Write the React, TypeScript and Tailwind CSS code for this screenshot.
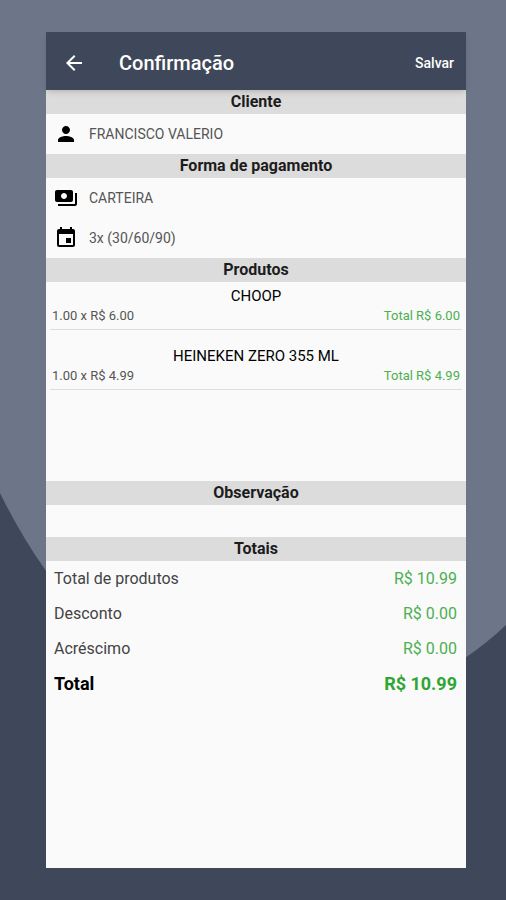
import type { ReactNode } from 'react';
import { MdArrowBack, MdEvent, MdPayments, MdPerson } from 'react-icons/md';

const PRODUCTS = [
    { name: 'CHOOP', quantity: '1.00', price: '6.00', total: '6.00' },
    { name: 'HEINEKEN ZERO 355 ML', quantity: '1.00', price: '4.99', total: '4.99' },
];

const TOTALS = [
    { label: 'Total de produtos', value: '10.99' },
    { label: 'Desconto', value: '0.00' },
    { label: 'Acréscimo', value: '0.00' },
];

function Backdrop() {
    return (
        <svg
            className="absolute inset-0 -z-10 h-full w-full"
            viewBox="0 0 506 900"
            preserveAspectRatio="none"
            aria-hidden="true"
        >
            <path d="M0 0H506V625Q487 643 465 658C330 745 150 720 46 571Q20 534 0 493Z" fill="#6c7688" />
        </svg>
    );
}

function SectionTitle({ id, children }: { id?: string; children: ReactNode }) {
    return (
        <h2 id={id} className="h-6 bg-[#dcdcdc] text-center text-base leading-6 font-bold text-[#1c1c1c]">
            {children}
        </h2>
    );
}

function InfoRow({ icon, children }: { icon: ReactNode; children: ReactNode }) {
    return (
        <div className="flex h-10 items-center gap-[11px] px-2 text-sm text-[#555555]">
            <span className="flex w-6 justify-center text-2xl text-black">{icon}</span>
            <span>{children}</span>
        </div>
    );
}

export default function App() {
    return (
        <div className="relative isolate flex min-h-screen flex-col bg-[#3e485a] pt-8 pr-10 pb-8 pl-[46px] font-['Roboto',sans-serif]">
            <Backdrop />
            <main className="flex flex-1 flex-col bg-[#fafafa]">
                <header className="z-10 flex h-[58px] items-center bg-[#3e485a] pt-1 pr-3 pl-4 text-white shadow-md">
                    <button type="button" aria-label="Voltar" className="text-2xl">
                        <MdArrowBack />
                    </button>
                    <h1 className="ml-[33px] flex-1 text-xl font-medium">Confirmação</h1>
                    <button type="button" className="text-sm font-medium">Salvar</button>
                </header>

                <section>
                    <SectionTitle>Cliente</SectionTitle>
                    <InfoRow icon={<MdPerson />}>FRANCISCO VALERIO</InfoRow>
                </section>

                <section>
                    <SectionTitle>Forma de pagamento</SectionTitle>
                    <InfoRow icon={<MdPayments />}>CARTEIRA</InfoRow>
                    <InfoRow icon={<MdEvent />}>3x (30/60/90)</InfoRow>
                </section>

                <section>
                    <SectionTitle>Produtos</SectionTitle>
                    <ul className="min-h-[199px] px-1">
                        {PRODUCTS.map(p => (
                            <li key={p.name} className="mb-3 border-b border-[#dedede] px-0.5 pt-1 pb-1">
                                <h3 className="text-center text-[15px] leading-5 text-black">{p.name}</h3>
                                <div className="flex justify-between text-[13px] leading-[19px] text-[#555555]">
                                    <span>{p.quantity} x R$ {p.price}</span>
                                    <span className="text-[#4caf50]">Total R$ {p.total}</span>
                                </div>
                            </li>
                        ))}
                    </ul>
                </section>

                <section>
                    <SectionTitle id="notes-title">Observação</SectionTitle>
                    <textarea
                        aria-labelledby="notes-title"
                        className="block h-8 w-full resize-none px-2 py-1 text-sm outline-none"
                    />
                </section>

                <section>
                    <SectionTitle>Totais</SectionTitle>
                    <dl className="pr-[9px] pl-2 text-base text-[#444444]">
                        {TOTALS.map(t => (
                            <div key={t.label} className="flex h-[35px] items-center justify-between">
                                <dt>{t.label}</dt>
                                <dd className="text-[#4caf50]">R$ {t.value}</dd>
                            </div>
                        ))}
                        <div className="flex h-[35px] items-center justify-between text-lg font-bold">
                            <dt className="text-black">Total</dt>
                            <dd className="text-[#2fa534]">R$ 10.99</dd>
                        </div>
                    </dl>
                </section>
            </main>
        </div>
    );
}
